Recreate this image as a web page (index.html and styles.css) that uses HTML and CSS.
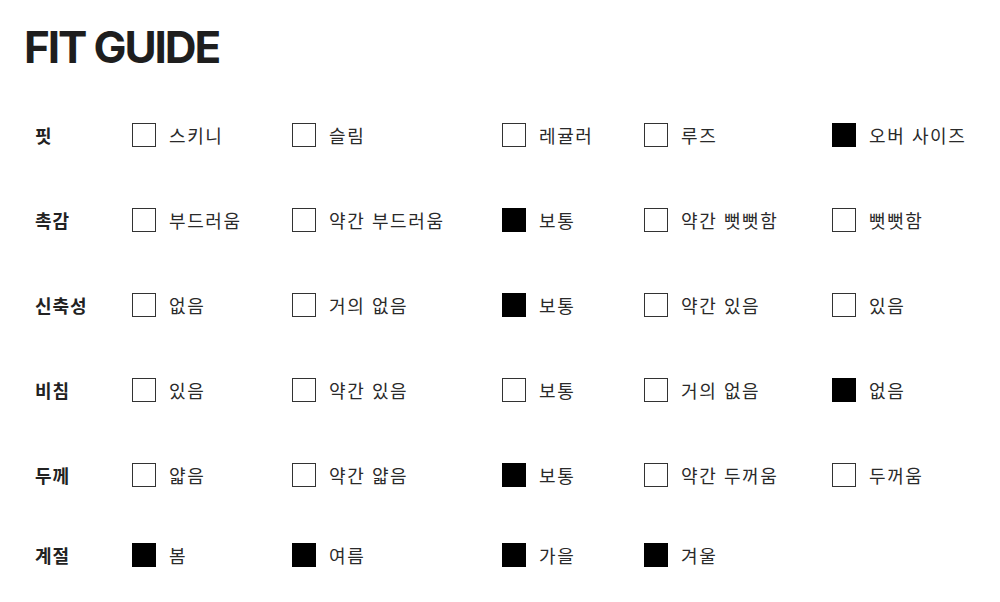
FILE: index.html
```html
<!DOCTYPE html>
<html lang="ko">
<head>
<meta charset="utf-8">
<link rel="stylesheet" href="styles.css">
</head>
<body>
<div class="page">
  <h1 class="title">FIT GUIDE</h1>
  <div class="guide">
    <div class="label">핏</div>
    <div class="opt"><span class="box"></span>스키니</div>
    <div class="opt"><span class="box"></span>슬림</div>
    <div class="opt"><span class="box"></span>레귤러</div>
    <div class="opt"><span class="box"></span>루즈</div>
    <div class="opt"><span class="box on"></span>오버 사이즈</div>

    <div class="label">촉감</div>
    <div class="opt"><span class="box"></span>부드러움</div>
    <div class="opt"><span class="box"></span>약간 부드러움</div>
    <div class="opt"><span class="box on"></span>보통</div>
    <div class="opt"><span class="box"></span>약간 뻣뻣함</div>
    <div class="opt"><span class="box"></span>뻣뻣함</div>

    <div class="label">신축성</div>
    <div class="opt"><span class="box"></span>없음</div>
    <div class="opt"><span class="box"></span>거의 없음</div>
    <div class="opt"><span class="box on"></span>보통</div>
    <div class="opt"><span class="box"></span>약간 있음</div>
    <div class="opt"><span class="box"></span>있음</div>

    <div class="label">비침</div>
    <div class="opt"><span class="box"></span>있음</div>
    <div class="opt"><span class="box"></span>약간 있음</div>
    <div class="opt"><span class="box"></span>보통</div>
    <div class="opt"><span class="box"></span>거의 없음</div>
    <div class="opt"><span class="box on"></span>없음</div>

    <div class="label">두께</div>
    <div class="opt"><span class="box"></span>얇음</div>
    <div class="opt"><span class="box"></span>약간 얇음</div>
    <div class="opt"><span class="box on"></span>보통</div>
    <div class="opt"><span class="box"></span>약간 두꺼움</div>
    <div class="opt"><span class="box"></span>두꺼움</div>

    <div class="label">계절</div>
    <div class="opt"><span class="box on"></span>봄</div>
    <div class="opt"><span class="box on"></span>여름</div>
    <div class="opt"><span class="box on"></span>가을</div>
    <div class="opt"><span class="box on"></span>겨울</div>
    <div class="opt"></div>
  </div>
</div>
</body>
</html>
```

FILE: styles.css
```css
* { box-sizing: border-box; }
html, body { margin: 0; padding: 0; background: #fff; }
body {
  font-family: "Noto Sans CJK KR", "Noto Sans", sans-serif;
  color: #222;
}
.title {
  margin: 0;
  padding: 24px 0 0 24px;
  font-family: Inter, "Noto Sans", sans-serif;
  font-weight: 700;
  font-size: 44px;
  line-height: 46px;
  letter-spacing: -2.1px;
  color: #1e1e1e;
}
.guide {
  margin-top: 22px;
  padding-left: 35px;
  display: grid;
  grid-template-columns: 97px 160px 210px 142px 188px auto;
  grid-template-rows: 85px 85px 85px 85px 85px 75px;
  align-items: center;
}
.label {
  font-weight: 700;
  font-size: 18px;
  letter-spacing: 1px;
  color: #222;
}
.opt {
  display: flex;
  align-items: center;
  gap: 13px;
  font-size: 18px;
  letter-spacing: 1.6px;
  color: #2a2a2a;
}
.box {
  width: 24px;
  height: 24px;
  border: 1px solid #333;
  background: #fff;
  flex: none;
}
.box.on {
  background: #000;
  border-color: #000;
}
```
